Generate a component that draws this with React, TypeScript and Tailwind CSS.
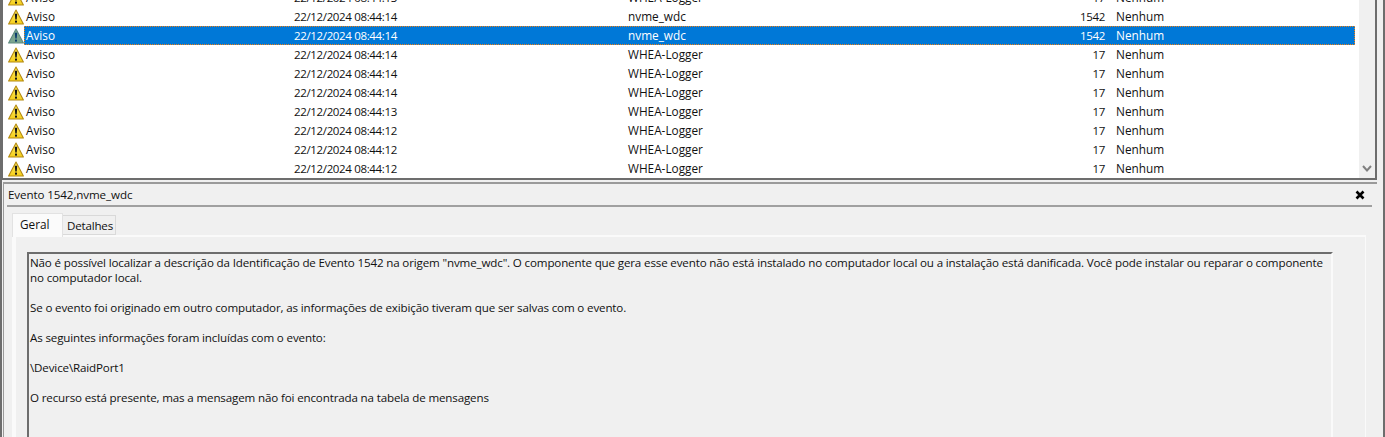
import React from 'react';

const rows = [
  { time: '08:44:13', source: 'WHEA-Logger', id: '17' },
  { time: '08:44:14', source: 'nvme_wdc', id: '1542' },
  { time: '08:44:14', source: 'nvme_wdc', id: '1542', selected: true },
  { time: '08:44:14', source: 'WHEA-Logger', id: '17' },
  { time: '08:44:14', source: 'WHEA-Logger', id: '17' },
  { time: '08:44:14', source: 'WHEA-Logger', id: '17' },
  { time: '08:44:13', source: 'WHEA-Logger', id: '17' },
  { time: '08:44:12', source: 'WHEA-Logger', id: '17' },
  { time: '08:44:12', source: 'WHEA-Logger', id: '17' },
  { time: '08:44:12', source: 'WHEA-Logger', id: '17' },
];

const WarnIcon = ({ selected }: { selected?: boolean }) => (
  <svg width="16" height="16" viewBox="0 0 16 16" className="shrink-0">
    <defs>
      <linearGradient id="warnFill" x1="0" y1="0" x2="0" y2="1">
        <stop offset="0" stopColor="#ffe95c" />
        <stop offset="1" stopColor="#f5cf1c" />
      </linearGradient>
    </defs>
    <path
      d="M8 1 L15.4 15 H0.6 Z"
      fill={selected ? '#7ba58f' : 'url(#warnFill)'}
      stroke={selected ? '#5f8a80' : '#b48a12'}
      strokeWidth="1.1"
      strokeLinejoin="round"
    />
    <path d="M6.8 4.8 H9.2 L8.7 10.6 H7.3 Z" fill={selected ? '#0b3c6e' : '#141414'} />
    <rect x="7" y="11.6" width="2" height="2" fill={selected ? '#0b3c6e' : '#141414'} />
  </svg>
);

const Row = ({ time, source, id, selected }: { time: string; source: string; id: string; selected?: boolean }) => (
  <div className="flex h-[19px] items-center pl-[5px] pr-[4px]">
    <WarnIcon selected={selected} />
    <div
      className={`flex h-[19px] flex-1 items-center border pl-px ${
        selected ? 'border-dotted border-[#f07f13] bg-[#0078d7] text-white' : 'border-transparent'
      }`}
    >
      <span className="w-[268px]">Aviso</span>
      <span className="w-[334px] text-[11.5px] tracking-[-0.35px]">22/12/2024 {time}</span>
      <span className="w-[420px]">{source}</span>
      <span className="w-[57px] text-right text-[11.5px] tracking-[-0.35px]">{id}</span>
      <span className="ml-[11px]">Nenhum</span>
    </div>
  </div>
);

export default function App() {
  return (
    <div className="flex h-[437px] w-[1385px] flex-col overflow-hidden border-x-2 border-[#6d6d6d] bg-[#f0f0f0] font-['Open_Sans','Noto_Sans',sans-serif] text-[11.8px] text-[#111111]">
      {/* Event list */}
      <div className="ml-0 mr-[6px] flex h-[180px] shrink-0 overflow-hidden border-b-2 border-l border-r-2 border-[#6d6d6d] bg-white">
        <div className="mt-[-12px] min-w-0 flex-1">
          {rows.map((r, i) => (
            <Row key={i} {...r} />
          ))}
        </div>
        <div className="flex w-[16px] shrink-0 flex-col justify-end bg-[#f0f0f0] pb-[4px]">
          <svg width="16" height="10" viewBox="0 0 16 10">
            <path d="M4 2 L8 6.5 L12 2" fill="none" stroke="#808080" strokeWidth="2" />
          </svg>
        </div>
      </div>

      {/* Details panel */}
      <div className="ml-px mr-[6px] mt-[2px] flex min-h-0 flex-1 flex-col border-l border-t-2 border-[#9a9a9a]">
        <div className="ml-[3px] mr-[5px] flex h-[23px] shrink-0 items-center justify-between border-b-2 border-[#a0a0a0] pl-px pr-[7px]">
          <span className="text-[11.6px] tracking-[-0.1px]">Evento 1542,nvme_wdc</span>
          <svg width="10" height="10" viewBox="0 0 10 10">
            <path d="M1.5 1.5 L8.5 8.5 M8.5 1.5 L1.5 8.5" stroke="#000000" strokeWidth="2.6" />
          </svg>
        </div>

        <div className="ml-[8px] mt-[6px] flex h-[22px] shrink-0 items-end">
          <div className="relative z-10 mb-[-2px] flex h-[24px] w-[51px] items-center border border-b-0 border-[#e2e2e2] bg-[#fbfbfb] pb-[2px] pl-[7px]">
            Geral
          </div>
          <div className="flex h-[20px] w-[53px] items-center border border-l-0 border-[#d9d9d9] bg-[#f0f0f0] pl-[4px] pt-[2px] text-[11.6px] tracking-[-0.2px]">
            Detalhes
          </div>
        </div>

        <div className="ml-[8px] mr-[11px] min-h-0 flex-1 border-b-0 border-l-[4px] border-r border-t-2 border-[#fafafa] pl-[11px] pr-[32px] pt-[15px]">
          <div className="h-full border-l-2 border-r-2 border-t-2 border-[#6d6d6d] border-r-[#fafafa] pl-px pt-px text-[11.6px] leading-[15px] tracking-[-0.15px]">
            <p>
              Não é possível localizar a descrição da Identificação de Evento 1542 na origem "nvme_wdc". O componente que gera esse evento não está instalado no computador local ou a instalação está danificada. Você pode instalar ou reparar o componente no computador local.
            </p>
            <p className="mt-[15px]">Se o evento foi originado em outro computador, as informações de exibição tiveram que ser salvas com o evento.</p>
            <p className="mt-[15px]">As seguintes informações foram incluídas com o evento:</p>
            <p className="mt-[15px]">\Device\RaidPort1</p>
            <p className="mt-[15px]">O recurso está presente, mas a mensagem não foi encontrada na tabela de mensagens</p>
          </div>
        </div>
      </div>
    </div>
  );
}
